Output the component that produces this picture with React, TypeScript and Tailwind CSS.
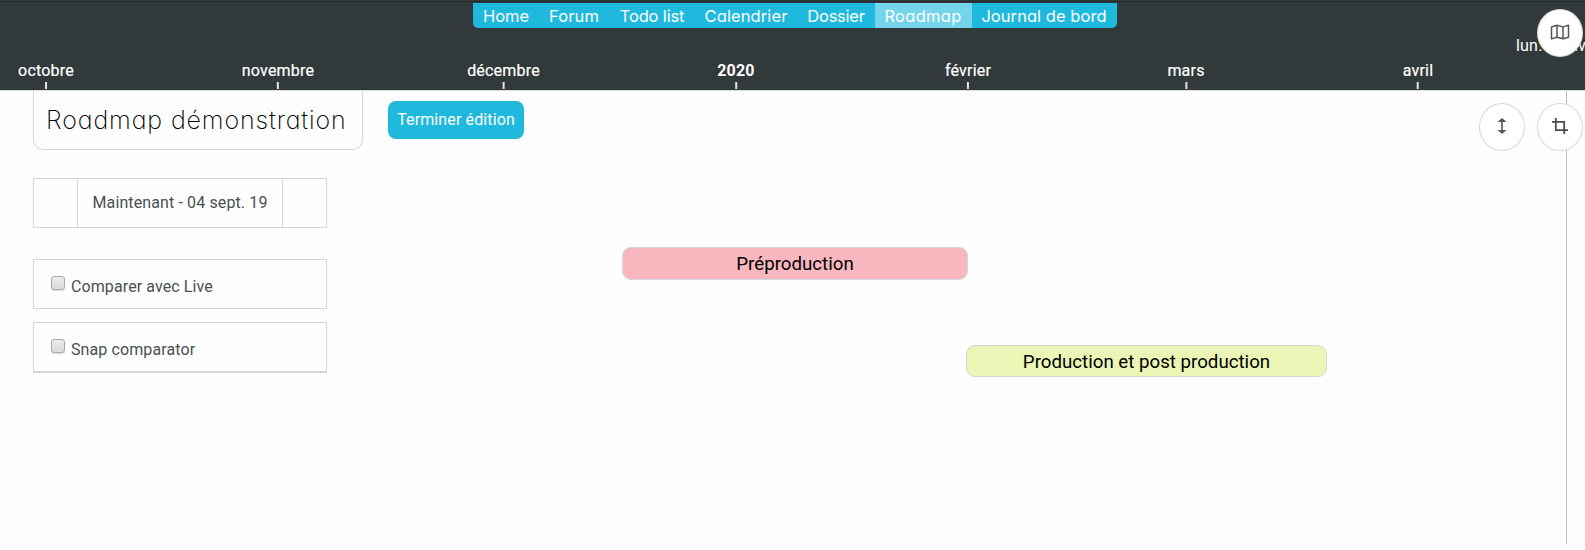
import React from "react";

const months = [
  { label: "octobre", x: 46 },
  { label: "novembre", x: 278 },
  { label: "décembre", x: 503.5 },
  { label: "2020", x: 736 },
  { label: "février", x: 968 },
  { label: "mars", x: 1186 },
  { label: "avril", x: 1418 },
];

const tabs = [
  { label: "Home", size: "w-[66px]" },
  { label: "Forum", size: "w-[71px] pr-px tracking-[0.1px]" },
  { label: "Todo list", size: "w-[85px] pr-px tracking-[-0.15px]" },
  { label: "Calendrier", size: "w-[102px] tracking-[0.1px]" },
  { label: "Dossier", size: "w-[78px] tracking-[-0.25px]" },
  { label: "Roadmap", size: "w-[97px] pr-px tracking-[0.3px]", active: true },
  { label: "Journal de bord", size: "w-[145px] pr-px tracking-[0.05px]" },
];

function Header() {
  return (
    <header className="relative h-[91px] overflow-hidden border-b border-[#dcdcdc] bg-[#32393a] text-white">
      <div className="mt-px h-px bg-[#242829]" />
      <nav className="ml-[473px] mt-px flex h-[25px] w-[644px] overflow-hidden rounded-b-[5px] bg-[#1fb9dd] font-[Inter,sans-serif] text-[16.5px] [font-feature-settings:'cv11']">
        {tabs.map((t) => (
          <a
            key={t.label}
            className={`flex shrink-0 items-center justify-center whitespace-nowrap pt-[2px] ${t.size} ${t.active ? "bg-[#73d4ea]" : ""}`}
          >
            {t.label}
          </a>
        ))}
      </nav>
      <span className="absolute left-[1516px] top-[34px] whitespace-nowrap text-[16px] leading-6 tracking-[0.2px]">lun. 27 avril</span>
      {months.map((m) => (
        <div
          key={m.label}
          className="absolute top-[60px] flex -translate-x-1/2 flex-col items-center text-[16px] leading-[22px]"
          style={{ left: m.x }}
        >
          <span className={m.label === "2020" ? "font-bold tracking-[0.2px]" : "font-normal tracking-[0.2px] [-webkit-text-stroke:0.2px_white]"}>{m.label}</span>
          <span className="h-[7px] w-[2px] bg-[#e6e4e2]" />
        </div>
      ))}
    </header>
  );
}

function RoundButton({ children }: { children: React.ReactNode }) {
  return (
    <button className="flex h-[48px] w-[46px] items-center justify-center rounded-[50%] border border-[#d8d8d8] bg-white">
      {children}
    </button>
  );
}

function CheckRow({ label, last }: { label: string; last?: boolean }) {
  return (
    <label className={`flex items-center border border-[#d6d6d6] pl-[17px] ${last ? "h-[51px] border-b-2" : "h-[50px]"}`}>
      <span className="-mt-[3px] h-[14px] w-[14px] rounded-[3px] border border-[#a9a9a9] bg-linear-to-b from-[#ececec] to-[#d9d9d9] shadow-[0_1px_1px_#ddd]" />
      <span className="ml-[6px] mt-[6px] text-[16px] leading-5 tracking-[0.1px]">{label}</span>
    </label>
  );
}

export default function App() {
  return (
    <div className="relative h-[550px] w-[1585px] overflow-hidden bg-[#fefefe] font-[Roboto,sans-serif] text-[#4a5051]">
      <Header />
      <div className="absolute left-[1566px] top-[91px] h-[453px] w-px bg-[#bdbdbd]" />

      <main className="pl-[33px]">
        <div className="flex items-start">
          <h1 className="flex h-[59px] w-[330px] items-center whitespace-nowrap rounded-b-[10px] border border-t-0 border-[#d6d6d6] pl-[12px] pt-[2px] font-[Inter,sans-serif] text-[25px] font-[250] tracking-[0.88px] text-black [font-feature-settings:'cv11']">
            Roadmap démonstration
          </h1>
          <button className="ml-[25px] mt-[10px] h-[38px] w-[136px] whitespace-nowrap rounded-[8px] bg-[#1fb9dd] text-[16px] tracking-[0.12px] text-white">
            Terminer édition
          </button>
        </div>
        <div className="mt-[28px] flex w-[294px] flex-col">
          <div className="flex h-[50px] border border-[#d6d6d6]">
            <button className="w-[43px]" />
            <div className="flex flex-1 items-center justify-center border-x border-[#d6d6d6] text-[16px] tracking-[0.12px]">
              Maintenant - 04 sept. 19
            </div>
            <button className="w-[43px]" />
          </div>
          <div className="mt-[31px] flex flex-col gap-[13px]">
            <CheckRow label="Comparer avec Live" />
            <CheckRow label="Snap comparator" last />
          </div>
        </div>
      </main>

      <div className="absolute left-[622px] top-[247px] flex h-[33px] w-[346px] items-center justify-center rounded-[9px] border border-[#d3d6da] bg-[#f8b6bf] pt-px text-[18.7px] text-black">
        Préproduction
      </div>
      <div className="absolute left-[966px] top-[345px] flex h-[32px] w-[361px] items-center justify-center rounded-[9px] border border-[#d3d6da] bg-[#ebf5b6] pt-[2px] text-[18.7px] text-black">
        Production et post production
      </div>

      <div className="absolute left-[1537px] top-[9px]">
        <RoundButton>
          <svg viewBox="0 0 20 16" className="-mt-[2px] h-[16px] w-[20px]" fill="none" stroke="#555" strokeWidth="1.5" strokeLinejoin="round">
            <path d="M1.5 3 7 1.3l6 1.6 5.5-1.7v12L13 14.8l-6-1.6-5.5 1.7zM7 1.3v12M13 2.9v12" />
          </svg>
        </RoundButton>
      </div>
      <div className="absolute left-[1479px] top-[103px] flex gap-3">
        <RoundButton>
          <svg viewBox="0 0 10 18" className="-mt-[2px] h-[18px] w-[10px]" fill="none" stroke="#5c5250" strokeWidth="1.6">
            <path d="M5 2v14" />
            <path d="M.5 5 5 1l4.5 4zM.5 13 5 17l4.5-4z" fill="#5c5250" stroke="none" />
          </svg>
        </RoundButton>
        <RoundButton>
          <svg viewBox="0 0 16 16" className="-mt-[2px] h-[16px] w-[16px]" fill="none" stroke="#4a4a4a" strokeWidth="1.8">
            <path d="M0 3.8h12.2V16M3.8 0v12.2H16" />
          </svg>
        </RoundButton>
      </div>
    </div>
  );
}
